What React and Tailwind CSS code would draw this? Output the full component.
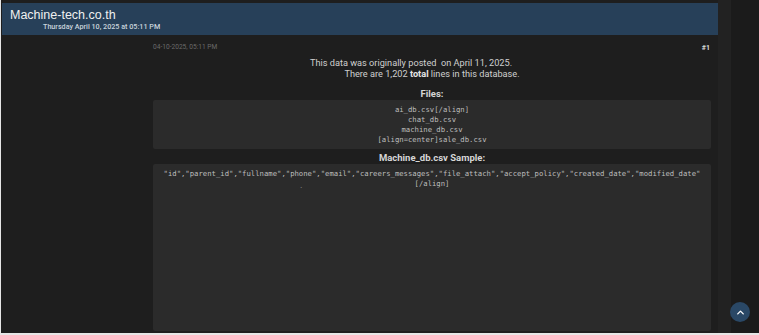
import React from 'react';
import { ChevronUp } from 'lucide-react';

const files = ['ai_db.csv[/align]', 'chat_db.csv', 'machine_db.csv', '[align=center]sale_db.csv'];

const columns = ['id', 'parent_id', 'fullname', 'phone', 'email', 'careers_messages', 'file_attach', 'accept_policy', 'created_date', 'modified_date'];

export default function App() {
  const mono = { fontFamily: '"DejaVu Sans Mono", "Liberation Mono", monospace' };

  return (
    <div className="w-[759px] h-[335px] overflow-hidden bg-[#e6e6e6] pl-[1px] pb-[2px] relative" style={{ fontFamily: 'Roboto, "Noto Sans", sans-serif' }}>
      <div className="flex h-full">
        {/* main column */}
        <div className="w-[717px] h-full bg-[#1e1e1e] pt-[3px] pl-[1px] flex flex-col">
          <div className="h-[32px] bg-[#274059] pl-[8px] pt-[6px]">
            <div className="text-[12.5px] leading-[13px] text-[#f0f0f0]" style={{ fontFamily: '"Liberation Sans", Arial, sans-serif' }}>Machine-tech.co.th</div>
            <div className="pl-[33px] text-[7.2px] leading-[10px] font-medium text-[#c9d3dc]">Thursday April 10, 2025 at 05:11 PM</div>
          </div>

          <div className="flex-1 flex flex-col pl-[151px] pr-[7px] pt-[8px]">
            <div className="flex justify-between items-center h-[10px]">
              <span className="text-[6.6px] text-[#6a6a6a]">04-10-2025, 05:11 PM</span>
              <span className="text-[7px] font-bold text-[#d8d8d8] pr-[1px]">#1</span>
            </div>

            <div className="text-center text-[#cfcfcf] text-[9.2px] leading-[11px] mt-[4px]">
              <div>This data was originally posted&nbsp; on April 11, 2025.<span className="inline-block w-[42px]" /></div>
              <div>There are 1,202 <b className="font-bold text-[#e6e6e6]">total</b> lines in this database.</div>
            </div>

            <div className="text-center text-[9.5px] leading-[12px] font-bold text-[#d6d6d6] mt-[9px]">Files:</div>
            <div className="bg-[#2b2b2b] rounded-[2px] text-center text-[7.25px] leading-[10px] text-[#bdbdbd] pt-[5px] pb-[4px]" style={mono}>
              {files.map(f => (
                <div key={f}>{f}</div>
              ))}
            </div>

            <div className="text-center text-[9.5px] leading-[12px] font-bold text-[#d6d6d6] mt-[3px]">Machine_db.csv Sample:</div>
            <div className="flex-1 bg-[#2b2b2b] rounded-[2px] text-center text-[7.25px] leading-[10px] text-[#bdbdbd] pt-[5px] mb-[2px]" style={mono}>
              <div>{columns.map(c => `"${c}"`).join(',')}</div>
              <div className="relative">
                <span>[/align]</span>
                <span className="absolute left-[146px] top-[2px] text-[#777]">.</span>
              </div>
            </div>
          </div>
        </div>

        {/* right gutter */}
        <div className="w-[13px] h-full bg-[#222222]" />
        <div className="flex-1 h-full bg-[#1b1b1b]" />
      </div>

      <button className="absolute left-[730px] top-[302px] w-[20px] h-[20px] rounded-full bg-[#2a4866] flex items-center justify-center">
        <ChevronUp className="w-[11px] h-[11px] text-white" strokeWidth={3} />
      </button>
    </div>
  );
}
